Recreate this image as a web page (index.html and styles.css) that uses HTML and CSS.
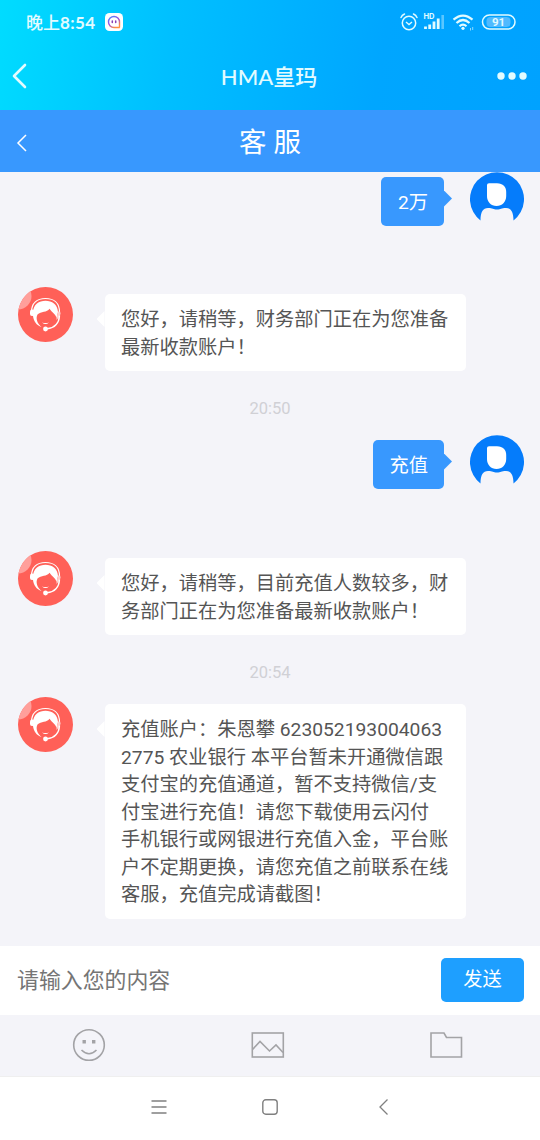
FILE: index.html
```html
<!DOCTYPE html>
<html lang="zh-CN">
<head>
<meta charset="utf-8">
<title>客服</title>
<link rel="stylesheet" href="styles.css">
</head>
<body>
<svg class="defs" width="0" height="0">
  <defs>
    <symbol id="agent" viewBox="0 0 55 55">
      <clipPath id="agent-clip"><circle cx="27.5" cy="27.5" r="27.5"/></clipPath>
      <circle cx="27.5" cy="27.5" r="27.5" fill="#ff6058"/>
      <circle cx="0" cy="9" r="13.5" fill="#ff9f9b" clip-path="url(#agent-clip)"/>
      <path d="M13.5 25C13.500 16 19 11.500 27.500 11.500S41.500 16 41.500 25" fill="none" stroke="#fff" stroke-width="1.200"/>
      <path d="M15 25C15.500 17.500 21 13.800 27.500 13.800S39.500 17.500 40 25L38.500 31C37.500 27 34 25.500 31.500 21.800C29 25.500 23 24.500 19.500 27.500C17.500 31 19 36.500 23.500 40C18.500 38.500 15.500 34 15 29Z" fill="#fff"/>
      <rect x="12" y="22.500" width="4.500" height="6.500" rx="2" fill="#fff"/>
      <path d="M38.500 31L40 24.500Q43 24 42.500 27Q41.500 30.500 38.500 33Z" fill="#ffcfcc"/>
      <path d="M24 35.500Q27.500 38.500 31 35.500Q27.500 36.500 24 35.500Z" fill="#fff"/>
      <path d="M41.500 28.500C41 36 37 41 29 41.800" fill="none" stroke="#fff" stroke-width="1.400"/>
      <circle cx="27.500" cy="42" r="2.400" fill="#fff"/>
    </symbol>
    <symbol id="user" viewBox="0 0 54 54">
      <path d="M10.500 48.500A27 27 0 1 1 43.500 48.500C43.500 40 41 36 36 36C31 36 31 37.500 27 37.500S23 36 18 36C13 36 10.500 40 10.500 48.500Z" fill="#057cfb"/>
      <path d="M17 13Q17 11.200 19 11.200H27C33 11.200 36.200 15 36.200 20V24C36.200 30 32 34 26.500 34S17 30 17 24Z" fill="#fff"/>
    </symbol>
  </defs>
</svg>
<div class="screen">
  <header class="top">
    <div class="status">
      <span class="clock">晚上<b>8:54</b></span>
      <svg class="app" width="18" height="18" viewBox="0 0 18 18"><defs><linearGradient id="ring" x1="0" y1="0" x2="0.600" y2="1"><stop offset="0" stop-color="#4a8cff"/><stop offset=".55" stop-color="#9b4be0"/><stop offset="1" stop-color="#ff9040"/></linearGradient></defs><rect width="18" height="18" rx="4.500" fill="#fff"/><path d="M14.800 14.500H9A5.500 5.500 0 1 1 14.500 9V14.500" fill="none" stroke="url(#ring)" stroke-width="1.400"/><path d="M7.300 7.900v1.500M10.700 7.900v1.500" stroke="#8a3fb5" stroke-width="1.500" stroke-linecap="round"/></svg>
      <span class="spacer"></span>
      <svg class="indicators" width="120" height="22" viewBox="0 0 120 22" fill="none" stroke="#e2fbff">
        <circle cx="12" cy="12" r="6.700" stroke-width="1.500"/>
        <path d="M9 11l3 2.500 3-2.500" stroke-width="1.400"/>
        <path d="M4 6.500Q5 4 7.500 3M16.500 3Q19 4 20 6.500" stroke-width="1.500" stroke-linecap="round"/>
        <text x="26.500" y="7.500" class="hd">HD</text>
        <path d="M28.500 18v-2.500M32.700 18v-4.500M37 18v-7.500M41.200 18v-10.500" stroke-width="2.800"/>
        <path d="M45.700 18V4" stroke-width="2.600" opacity=".4"/>
        <path d="M56.500 8.700Q66 .5 75.500 8.700M59.500 12Q66 6 72.500 12M62.500 15.200Q66 12 69.500 15.200" stroke-width="2.200"/>
        <circle cx="66" cy="17.300" r="1.600" fill="#e2fbff" stroke="none"/>
        <path d="M73.500 17v2.500M75.700 16v3" stroke-width="1" opacity=".6"/>
        <rect x="85.500" y="4" width="32.500" height="14" rx="7" stroke-width="1.500"/>
        <rect x="89.500" y="6" width="24" height="10" rx="4" fill="#4fbaff" stroke="none"/>
        <text x="101.500" y="15" class="battery">91</text>
      </svg>
    </div>
    <div class="appbar">
      <svg width="16" height="26" viewBox="0 0 16 26"><path d="M14 2L3 13l11 11" fill="none" stroke="#e2fbff" stroke-width="2.600" stroke-linecap="round" stroke-linejoin="round"/></svg>
      <h1>HMA皇玛</h1>
      <svg width="30" height="8" viewBox="0 0 30 8" fill="#e2fbff"><circle cx="4" cy="4" r="3.700"/><circle cx="15" cy="4" r="3.700"/><circle cx="26" cy="4" r="3.700"/></svg>
    </div>
  </header>
  <div class="titlebar">
    <svg width="12" height="18" viewBox="0 0 12 18"><path d="M10 1L2 9l8 8" fill="none" stroke="#fff" stroke-width="1.500"/></svg>
    <h2>客 服</h2>
    <span class="balance"></span>
  </div>
  <main class="chat">
    <div class="row mine first"><p class="bubble">2万</p><svg class="avatar"><use href="#user"/></svg></div>
    <div class="row theirs"><svg class="avatar"><use href="#agent"/></svg><p class="bubble">您好，请稍等，财务部门正在为您准备<br>最新收款账户！</p></div>
    <time>20:50</time>
    <div class="row mine"><p class="bubble">充值</p><svg class="avatar"><use href="#user"/></svg></div>
    <div class="row theirs"><svg class="avatar"><use href="#agent"/></svg><p class="bubble">您好，请稍等，目前充值人数较多，财<br>务部门正在为您准备最新收款账户！</p></div>
    <time>20:54</time>
    <div class="row theirs"><svg class="avatar"><use href="#agent"/></svg><p class="bubble">充值账户：朱恩攀 623052193004063<br>2775 农业银行 本平台暂未开通微信跟<br>支付宝的充值通道，暂不支持微信/支<br>付宝进行充值！请您下载使用云闪付<br>手机银行或网银进行充值入金，平台账<br>户不定期更换，请您充值之前联系在线<br>客服，充值完成请截图！</p></div>
  </main>
  <div class="composer"><span class="placeholder">请输入您的内容</span><button class="send">发送</button></div>
  <div class="tools">
    <svg width="34" height="34" viewBox="0 0 34 34" fill="none" stroke="#a3a3a6" stroke-width="1.600"><circle cx="17" cy="17" r="15.300"/><path d="M9.500 22Q17 29.500 24.500 22"/><path d="M10.500 13.800h3.400M20 13.800h3.400" stroke-width="3.400"/></svg>
    <svg width="34" height="34" viewBox="0 0 34 34" fill="none" stroke="#a3a3a6" stroke-width="1.600"><rect x="1.300" y="5" width="31" height="24"/><path d="M1.500 21.500L9 13.500L18.500 23L25 17L32 24.500"/></svg>
    <svg width="34" height="34" viewBox="0 0 34 34" fill="none" stroke="#a3a3a6" stroke-width="1.600"><path d="M2 29V5H15L17.500 9.500H32.500V29Z"/></svg>
  </div>
  <nav class="navbar">
    <svg width="16" height="16" viewBox="0 0 16 16"><path d="M.5 2h15M.5 8h15M.5 14h15" stroke="#808080" stroke-width="1.300"/></svg>
    <svg width="16" height="16" viewBox="0 0 16 16"><rect x=".8" y=".8" width="14.400" height="14.400" rx="3" fill="none" stroke="#808080" stroke-width="1.400"/></svg>
    <svg width="16" height="16" viewBox="0 0 16 16"><path d="M12.500 .5L5 8l7.500 7.500" fill="none" stroke="#808080" stroke-width="1.300"/></svg>
  </nav>
</div>
</body>
</html>
```
FILE: styles.css
```css
* { box-sizing: border-box; }
body { margin: 0; font-family: Roboto, "Noto Sans CJK SC", sans-serif; }
h1, h2, p { margin: 0; font-weight: 400; }
svg { display: block; flex: none; }
.defs { position: absolute; }
.screen { width: 540px; height: 1140px; display: flex; flex-direction: column; overflow: hidden; background: #f4f4f9; }
.top { height: 110px; flex: none; background: linear-gradient(100deg, #00dcff 0%, #00bfff 32%, #00a6ff 70%, #00a2ff 100%); color: #e2fbff; }
.status { height: 44px; padding: 0 20px 0 26px; display: flex; align-items: center; }
.clock { width: 71px; padding-top: 1px; font: 500 17px/24px Lato, "Noto Sans CJK SC", sans-serif; white-space: nowrap; }
.clock b { font-weight: 700; letter-spacing: .4px; }
.app { margin-left: 8px; }
.spacer { flex: 1; }
.indicators { margin-right: 3px; }
.hd { font: 700 7.500px Inter, sans-serif; fill: #e2fbff; stroke: none; }
.battery { font: 700 11.500px Roboto, sans-serif; fill: #e2fbff; stroke: none; text-anchor: middle; }
.appbar { height: 64px; padding: 0 13px 0 11px; display: flex; align-items: center; justify-content: space-between; }
.appbar h1 { font: 500 22px/32px Lato, "Noto Sans CJK SC", sans-serif; padding: 1px 0 0 14px; }
.titlebar { height: 62px; flex: none; padding: 3px 16px 0; display: flex; align-items: center; justify-content: space-between; background: #3898fe; color: #fff; }
.titlebar h2 { font-size: 27.500px; line-height: 40px; }
.balance { width: 12px; }
.chat { height: 774px; flex: none; overflow: hidden; }
.row { display: flex; align-items: flex-start; }
.bubble { position: relative; padding: 12px 16.500px 10px; border-radius: 5px; font-size: 19.250px; line-height: 27.500px; white-space: nowrap; }
.bubble::before { content: ""; position: absolute; top: 14px; width: 8px; height: 16px; }
.theirs { padding-left: 18px; gap: 31.500px; }
.theirs .avatar { width: 55px; height: 55px; }
.theirs .bubble { width: 361.500px; margin-top: 7px; background: #fff; color: #555; }
.theirs .bubble::before { top: 17px; right: 100%; background: #fff; clip-path: polygon(100% 0, 0 50%, 100% 100%); }
.mine { height: 116px; padding-right: 16.500px; justify-content: flex-end; gap: 25.500px; }
.mine.first { height: 115px; }
.mine .avatar { width: 54px; height: 54px; }
.mine .bubble { padding-right: 16px; padding-left: 16.500px; margin-top: 4.500px; background: #3898fe; color: #fff; }
.mine .bubble::before { left: 100%; background: #3898fe; clip-path: polygon(0 0, 100% 50%, 0 100%); }
time { display: block; height: 64px; padding-top: 28px; font-size: 16.500px; line-height: 20px; text-align: center; color: #d0d0d5; }
time + .theirs { margin-top: -2px; }
.composer { height: 69px; flex: none; padding: 0 16px 1px 17px; display: flex; align-items: center; justify-content: space-between; background: #fff; }
.placeholder { padding-top: 2px; font-size: 21.900px; line-height: 32px; color: #757575; }
.send { width: 83px; height: 44px; padding: 0; border: 0; border-radius: 5px; background: #1e9fff; color: #fff; font: 400 19.250px/28px Roboto, "Noto Sans CJK SC", sans-serif; }
.tools { height: 61px; flex: none; padding: 0 77px 1px 72px; display: flex; align-items: center; justify-content: space-between; }
.navbar { height: 64px; flex: none; padding: 0 149px 3px 151px; display: flex; align-items: center; justify-content: space-between; background: #fff; border-top: 1px solid #efefef; }
.navbar svg:nth-child(2) { margin-right: 2px; }
```
